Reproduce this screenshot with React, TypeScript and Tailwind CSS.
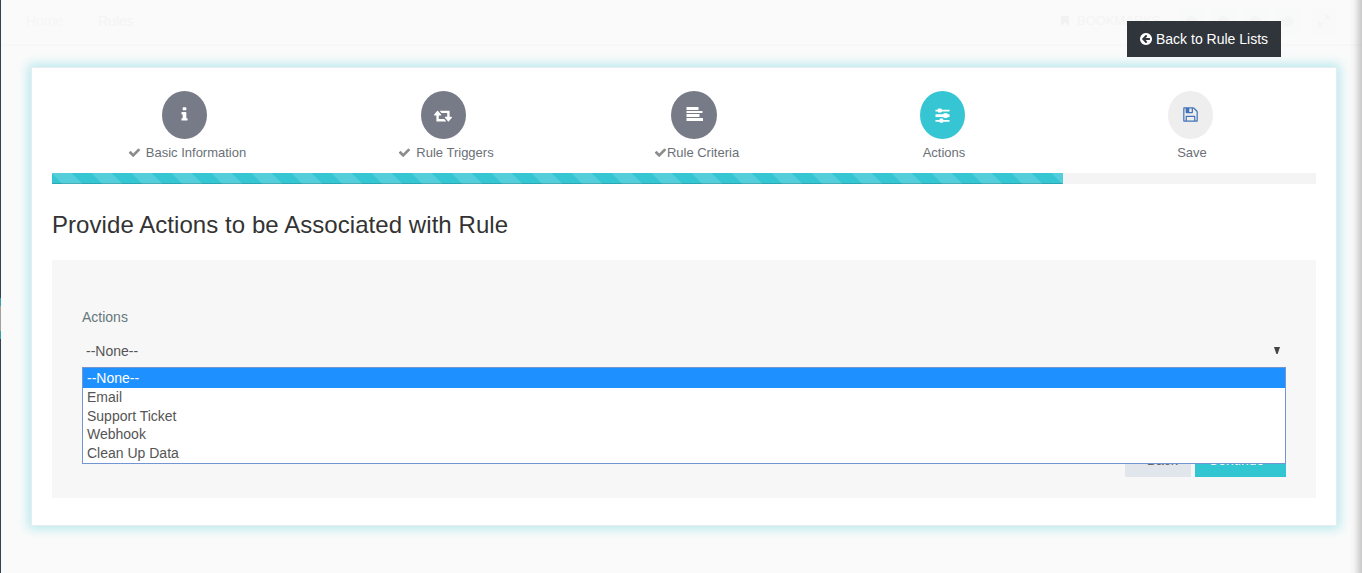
import React from "react";

type IconProps = { d: string; box: string; className: string };
const Glyph = ({ d, box, className }: IconProps) => (
  <svg viewBox={box} fill="currentColor" className={className} aria-hidden="true">
    <path d={d} />
  </svg>
);

const INFO =
  "M1216 1344v128q0 26-19 45t-45 19h-512q-26 0-45-19t-19-45v-128q0-26 19-45t45-19h64v-384h-64q-26 0-45-19t-19-45v-128q0-26 19-45t45-19h384q26 0 45 19t19 45v576h64q26 0 45 19t19 45zm-128-1152v192q0 26-19 45t-45 19h-256q-26 0-45-19t-19-45v-192q0-26 19-45t45-19h256q26 0 45 19t19 45z";
const RETWEET =
  "M1280 1504q0 13-9.5 22.5t-22.5 9.5h-960q-8 0-13.5-2t-9-7-5.5-8-3-11.5-1-11.5v-600h-192q-26 0-45-19t-19-45q0-24 15-41l320-384q19-22 49-22t49 22l320 384q15 17 15 41 0 26-19 45t-45 19h-192v384h576q16 0 25 11l160 192q7 10 7 21zm640-416q0 24-15 41l-320 384q-20 23-49 23t-49-23l-320-384q-15-17-15-41 0-26 19-45t45-19h192v-384h-576q-16 0-25-12l-160-192q-7-9-7-20 0-13 9.5-22.5t22.5-9.5h960q8 0 13.5 2t9 7 5.5 8 3 11.5 1 11.5v600h192q26 0 45 19t19 45z";
const CHECK =
  "M1671 566q0 40-28 68l-724 724-136 136q-28 28-68 28t-68-28l-136-136-362-362q-28-28-28-68t28-68l136-136q28-28 68-28t68 28l294 295 656-657q28-28 68-28t68 28l136 136q28 28 28 68z";
const FLOPPY =
  "M512 1536h768v-384h-768v384zm896 0h128v-896q0-14-10-38.5t-20-34.5l-281-281q-10-10-34-20t-39-10v416q0 40-28 68t-68 28h-576q-40 0-68-28t-28-68v-416h-128v1280h128v-416q0-40 28-68t68-28h832q40 0 68 28t28 68v416zm-384-928v-320q0-13-9.5-22.5t-22.5-9.5h-192q-13 0-22.5 9.5t-9.5 22.5v320q0 13 9.5 22.5t22.5 9.5h192q13 0 22.5-9.5t9.5-22.5zm640 32v928q0 40-28 68t-68 28h-1344q-40 0-68-28t-28-68v-1344q0-40 28-68t68-28h928q40 0 88 20t76 48l280 280q28 28 48 76t20 88z";
const ARROW_CIRCLE =
  "M1408 960v-128q0-26-19-45t-45-19h-502l189-189q19-19 19-45t-19-45l-91-91q-18-18-45-18t-45 18l-362 362-91 91q-18 18-18 45t18 45l91 91 362 362q18 18 45 18t45-18l91-91q18-18 18-45t-18-45l-189-189h502q26 0 45-19t19-45zm256-64q0 209-103 385.5t-279.5 279.5-385.5 103-385.5-103-279.5-279.5-103-385.5 103-385.5 279.5-279.5 385.5-103 385.5 103 279.5 279.5 103 385.5z";

const BarsIcon = () => (
  <svg viewBox="0 0 17 14" className="mb-0.5 h-[14px] w-[17px]" fill="currentColor">
    <path d="M0.5 0h12v3H0.5zM0.5 4h16v2H0.5zM0.5 7h13v3H0.5zM0.5 11h17v3H0.5z" />
  </svg>
);

const SlidersIcon = () => (
  <svg viewBox="0 0 15 15" className="h-[15px] w-[15px]" fill="currentColor">
    <path d="M0.5 1.8h14v1.7H0.5zM0.5 6.2h14v2.7H0.5zM0.5 12h14v1.7H0.5z" />
    <rect x="2.7" y="0.4" width="4" height="4.2" rx="1" />
    <rect x="8.3" y="5.2" width="4.4" height="4.8" rx="1" />
    <rect x="4.6" y="10.6" width="3.6" height="4.2" rx="1" />
  </svg>
);

const steps = [
  { label: "Basic Information", checkGap: "gap-[5px]", cell: "w-[265px]", shift: "pl-[5px]", circle: "bg-[#777b87] text-white w-[45px]", done: true,
    icon: <Glyph d={INFO} box="0 0 1792 1792" className="mb-px h-[17px] w-[17px]" /> },
  { label: "Rule Triggers", checkGap: "gap-[5px]", cell: "w-[252px]", shift: "pl-[6px]", circle: "bg-[#777b87] text-white w-[45px]", done: true,
    icon: <Glyph d={RETWEET} box="0 0 1920 1792" className="h-[17px] w-[18px]" /> },
  { label: "Rule Criteria", checkGap: "gap-0", cell: "w-[250px]", shift: "pl-[5px]", circle: "bg-[#777b87] text-white w-[46px]", done: true,
    icon: <BarsIcon /> },
  { label: "Actions", checkGap: "", cell: "w-[247px]", shift: "pl-[3px]", circle: "bg-[#36c6d3] text-white w-[45px]", done: false,
    icon: <SlidersIcon /> },
  { label: "Save", checkGap: "", cell: "w-[249px]", shift: "pl-[3px]", circle: "bg-[#eeeeee] text-[#4273b8] w-[45px]", done: false,
    icon: <Glyph d={FLOPPY} box="0 0 1792 1792" className="mb-px h-[17px] w-[17px]" /> },
];

const options = ["Email", "Support Ticket", "Webhook", "Clean Up Data"];

export default function App() {
  return (
    <div className="relative h-[573px] w-[1362px] overflow-hidden bg-[#fafafa] font-['Liberation_Sans',Arial,sans-serif] text-[#333]">
      <header className="flex h-[46px] items-start border-b-2 border-[#f7f7f7] pt-[7px] pl-[26px] text-[14px] leading-[18px] text-[#f6f6f6]">
        <span className="mt-[5px] w-[72px]">Home</span>
        <span className="mt-[5px] w-[963px] text-[#f4f4f4]">Rules</span>
        <Glyph d="M0 0h8v10l-4-4-4 4z" box="0 0 8 10" className="mt-[9px] h-[10px] w-2 text-[#f2f2f2]" />
        <span className="mt-[5px] ml-2 w-[102px] text-[13px] text-[#f4f4f4]">BOOKMARKS</span>
        <div className="flex gap-[7px]">
          {[0, 1, 2, 3].map((i) => (
            <span key={i} className="flex h-7 w-[25px] items-center justify-center bg-[#f8f9f9]">
              <span className="h-[11px] w-[11px] rounded-full bg-[#f5f5f5]" />
            </span>
          ))}
          <span className="ml-1 flex h-7 w-[26px] items-center justify-center bg-[#f9f9f9]">
            <svg viewBox="0 0 12 12" className="h-3 w-3" fill="none" stroke="#f4f4f4" strokeWidth="1.5">
              <path d="M1 7v4h4M7 1h4v4M1 11l4-4M11 1L7 5" />
            </svg>
          </span>
        </div>
      </header>

      <button className="absolute top-[21px] left-[1127px] flex h-9 w-[154px] items-center bg-[#2f353b] pl-3 text-[14px] leading-5 whitespace-nowrap text-white">
        <Glyph d={ARROW_CIRCLE} box="0 0 1792 1792" className="mr-[3px] h-[14px] w-[14px]" />
        <span>Back to Rule Lists</span>
      </button>

      <main className="mt-[21px] ml-[31px] h-[459px] w-[1306px] border border-[#e7ecf1] bg-white px-5 pt-[23px] shadow-[0_0_10px_3px_#b8e9ed]">
        <nav className="flex h-[82px]">
          {steps.map((s) => (
            <div key={s.label} className={`flex flex-col items-center ${s.cell}`}>
              <div className={`flex h-12 items-center justify-center rounded-[50%] ${s.circle}`}>{s.icon}</div>
              <div className={`mt-1 flex items-center text-[13px] leading-[19px] whitespace-nowrap text-[#6b7077] ${s.checkGap} ${s.shift}`}>
                {s.done && <Glyph d={CHECK} box="0 0 1792 1792" className="h-[13px] w-[13px] text-[#8c8c8c]" />}
                <span>{s.label}</span>
              </div>
            </div>
          ))}
        </nav>

        <div className="h-[11px] bg-[#f4f4f4]">
          <div className="h-full w-[1011px] bg-[#36c6d3] bg-[linear-gradient(45deg,rgba(255,255,255,.15)_25%,transparent_25%,transparent_50%,rgba(255,255,255,.15)_50%,rgba(255,255,255,.15)_75%,transparent_75%,transparent)] bg-[length:40px_40px] shadow-[inset_0_-1px_0_rgba(0,0,0,.15)]" />
        </div>

        <h3 className="mt-[25px] h-[51px] text-[24px] leading-[31px] tracking-[0.06px]">Provide Actions to be Associated with Rule</h3>

        <section className="h-[238px] bg-[#f7f7f7] px-[30px] pt-[47px]">
          <label className="block text-[14px] leading-5 text-[#65787c]">Actions</label>
          <div className="relative mt-[7px] h-[34px]">
            <div className="flex h-[33px] items-center justify-between pr-[6px] pl-1 text-[14px] text-[#555]">
              <span className="pt-[2px]">--None--</span>
              <svg viewBox="0 0 6 7" className="h-[7px] w-[6px]" fill="#444"><path d="M0 0h6L3.6 7H2.4z" /></svg>
            </div>
            <ul className="absolute top-[33px] left-0 z-10 h-[97px] w-[1204px] border border-[#7396d3] bg-white text-[14px] text-[#555]">
              <li className="h-5 bg-[#1e90ff] pl-1 leading-[20px] text-white">--None--</li>
              {options.map((o) => (
                <li key={o} className="h-[18.5px] pl-1 leading-[19px]">{o}</li>
              ))}
            </ul>
          </div>
          <div className="mt-[75px] flex h-[34px] justify-end gap-1 text-[14px] leading-[34px]">
            <button className="w-[66px] bg-[#e1e5ec] text-[#666]">‹ Back</button>
            <button className="w-[91px] bg-[#32c5d2] text-white">Continue ›</button>
          </div>
        </section>
      </main>

      <div className="absolute top-0 left-0 h-full w-px bg-[#364150]" />
      <div className="absolute top-[298px] left-0 h-[41px] w-px border-y-8 border-[#36a0aa] bg-[#a5a09c]" />
      <div className="absolute top-0 right-0 h-full w-[13px] bg-[linear-gradient(to_right,transparent,rgba(0,0,0,.03)_40%,rgba(0,0,0,.2))]" />
    </div>
  );
}
